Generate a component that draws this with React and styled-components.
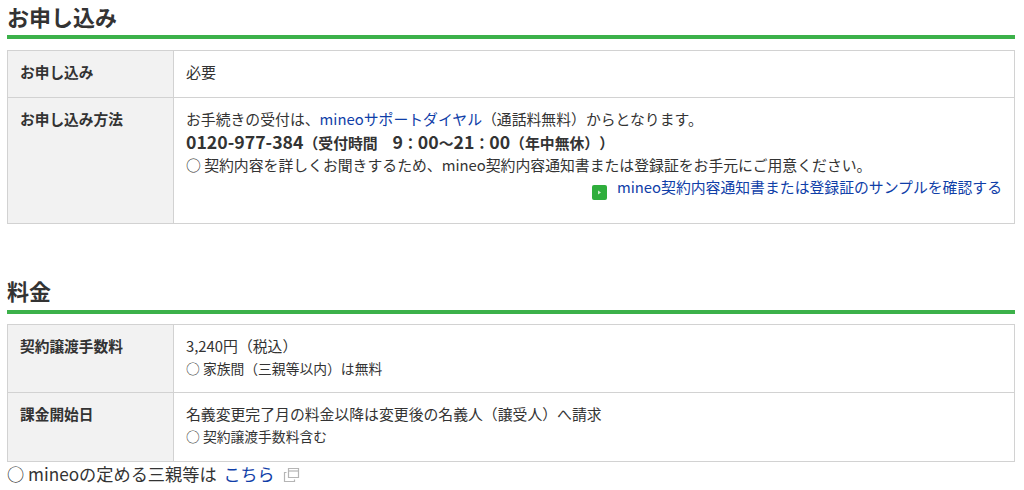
import React from 'react'
import styled, { createGlobalStyle } from 'styled-components'

const GlobalStyle = createGlobalStyle`
  html, body {
    margin: 0;
    padding: 0;
    background: #fff;
    overflow: hidden;
  }
  body {
    font-family: "Noto Sans CJK JP", "Liberation Sans", sans-serif;
    color: #333;
    font-size: 15px;
    text-spacing-trim: space-all;
  }
`

const Page = styled.div`
  width: 1024px;
  height: 490px;
  padding: 0 9px 0 7px;
  box-sizing: border-box;
  overflow: hidden;
`
const Heading = styled.h2`
  margin: 0 0 ${props => props.$gap}px;
  padding-top: ${props => props.$top || 0}px;
  height: ${props => props.$height}px;
  font-size: 22px;
  line-height: 32px;
  font-weight: 700;
  color: #333;
  border-bottom: 4px solid #3cb14a;
`
const Table = styled.div`
  display: grid;
  grid-template-columns: 166px 1fr;
  border: 1px solid #d2d2d2;
  border-bottom: 0;
`
const Label = styled.div`
  height: ${props => props.$height}px;
  box-sizing: border-box;
  padding: 10px 12px 0;
  background: #f2f2f2;
  border-right: 1px solid #d2d2d2;
  border-bottom: 1px solid #d2d2d2;
  font-size: 14.7px;
  font-weight: 700;
  line-height: 22px;
`
const Cell = styled.div`
  height: ${props => props.$height}px;
  box-sizing: border-box;
  padding: 10px 12px 0;
  border-bottom: 1px solid #d2d2d2;
  line-height: 22px;
`
const Line = styled.div`
  font-size: ${props => props.$size || 14.85}px;
  line-height: ${props => props.$line || 22}px;
  font-weight: ${props => props.$bold ? 700 : 400};
`
const Num = styled.span`
  font-size: 17.7px;
`
const BlueLink = styled.a`
  color: #0f3ea8;
  text-decoration: none;
`
const SampleRow = styled.div`
  display: flex;
  justify-content: flex-end;
  align-items: flex-start;
  font-size: 14.85px;
  line-height: 22px;
`
const SampleIcon = styled.svg`
  width: 15px;
  height: 15px;
  margin-right: 10px;
  margin-top: 9px;
`
const Footnote = styled.div`
  display: flex;
  align-items: center;
  font-size: 17.2px;
  line-height: 24px;
`
const FootLink = styled(BlueLink)`
  font-size: 17px;
  margin-left: 7px;
`
const WindowIcon = styled.svg`
  width: 17px;
  height: 16px;
  margin-left: 8px;
  margin-top: 2px;
`

export default function App() {
  return (
    <Page>
      <GlobalStyle />
      <Heading $height={35} $gap={11}>お申し込み</Heading>
      <Table>
        <Label $height={47}>お申し込み</Label>
        <Cell $height={47}>必要</Cell>
        <Label $height={126}>お申し込み方法</Label>
        <Cell $height={126}>
          <Line>お手続きの受付は、<BlueLink href="#">mineoサポートダイヤル</BlueLink>（通話料無料）からとなります。</Line>
          <Line $bold>
            <Num>0120-977-384</Num>（受付時間　<Num>9</Num>：<Num>00</Num>〜<Num>21</Num>：<Num>00</Num>（年中無休））
          </Line>
          <Line>○ 契約内容を詳しくお聞きするため、mineo契約内容通知書または登録証をお手元にご用意ください。</Line>
          <SampleRow>
            <SampleIcon viewBox="0 0 15 15">
              <rect width="15" height="15" rx="2" fill="#2fae3c" />
              <path d="M6 5.5l3 2-3 2z" fill="#cdeccf" />
            </SampleIcon>
            <BlueLink href="#">mineo契約内容通知書または登録証のサンプルを確認する</BlueLink>
          </SampleRow>
        </Cell>
      </Table>
      <Heading $top={50} $height={36} $gap={10}>料金</Heading>
      <Table>
        <Label $height={68}>契約譲渡手数料</Label>
        <Cell $height={68}>
          <Line>3,240円（税込）</Line>
          <Line $size={13.8} $line={23}>○ 家族間（三親等以内）は無料</Line>
        </Cell>
        <Label $height={69}>課金開始日</Label>
        <Cell $height={69}>
          <Line>名義変更完了月の料金以降は変更後の名義人（譲受人）へ請求</Line>
          <Line $size={13.8} $line={23}>○ 契約譲渡手数料含む</Line>
        </Cell>
      </Table>
      <Footnote>
        ○ mineoの定める三親等は
        <FootLink href="#">こちら</FootLink>
        <WindowIcon viewBox="0 0 17 16" fill="none" stroke="#b5b5b5" strokeWidth="1.2">
          <path d="M5.5 1.5h10v9h-10z" />
          <path d="M5.5 4h10" />
          <path d="M3.5 5.5h-2v9h10v-2" />
        </WindowIcon>
      </Footnote>
    </Page>
  )
}
